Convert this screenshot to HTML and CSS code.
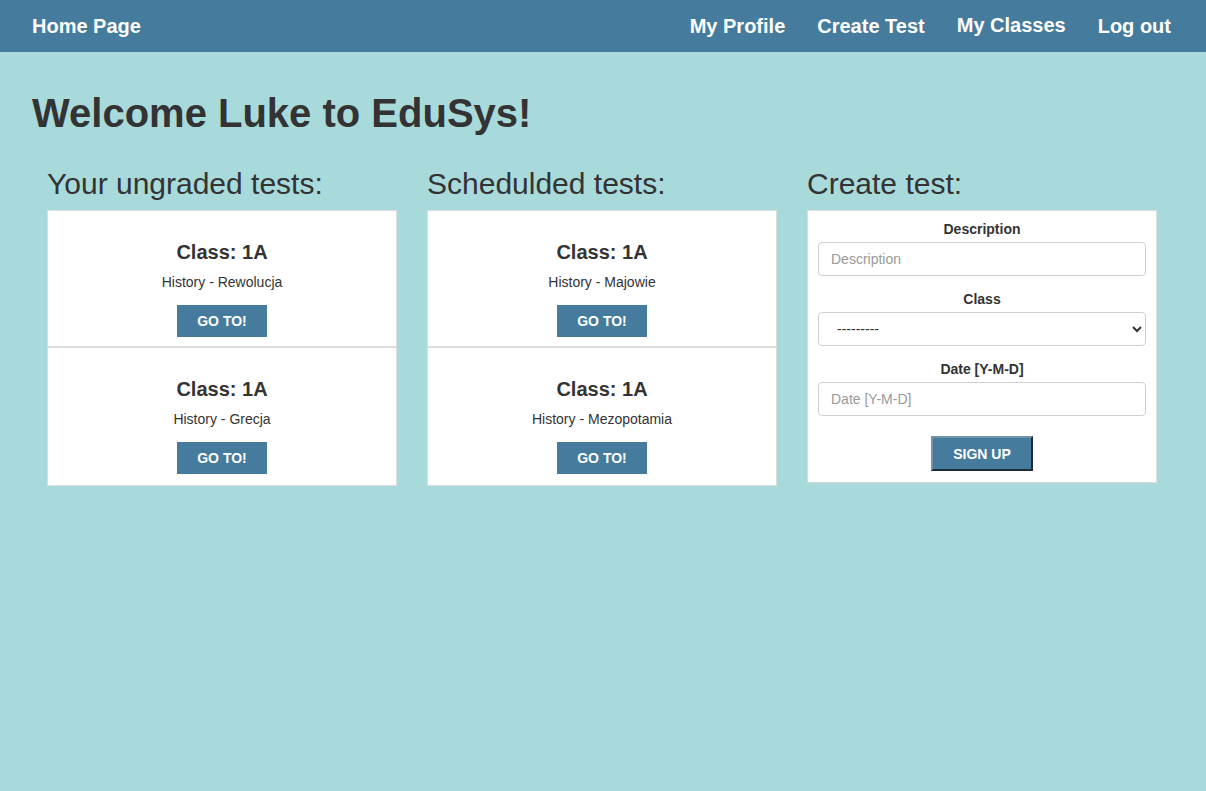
FILE: index.html
```html
<!DOCTYPE html>
<html lang="en">
<head>
<meta charset="utf-8">
<title>EduSys</title>
<link rel="stylesheet" href="styles.css">
</head>
<body>
<nav class="navbar">
  <a class="nav-brand" href="#">Home Page</a>
  <ul class="nav-links">
    <li><a href="#">My Profile</a></li>
    <li><a href="#">Create Test</a></li>
    <li><a href="#" class="active">My Classes</a></li>
    <li><a href="#">Log out</a></li>
  </ul>
</nav>
<main class="main">
  <h1 class="welcome">Welcome Luke to EduSys!</h1>
  <div class="columns">
    <section class="column">
      <h2 class="col-title">Your ungraded tests:</h2>
      <div class="card">
        <div class="item">
          <h3 class="item-title">Class: 1A</h3>
          <p class="item-sub">History - Rewolucja</p>
          <button class="btn">GO TO!</button>
        </div>
        <div class="item">
          <h3 class="item-title">Class: 1A</h3>
          <p class="item-sub">History - Grecja</p>
          <button class="btn">GO TO!</button>
        </div>
      </div>
    </section>
    <section class="column">
      <h2 class="col-title">Schedulded tests:</h2>
      <div class="card">
        <div class="item">
          <h3 class="item-title">Class: 1A</h3>
          <p class="item-sub">History - Majowie</p>
          <button class="btn">GO TO!</button>
        </div>
        <div class="item">
          <h3 class="item-title">Class: 1A</h3>
          <p class="item-sub">History - Mezopotamia</p>
          <button class="btn">GO TO!</button>
        </div>
      </div>
    </section>
    <section class="column">
      <h2 class="col-title">Create test:</h2>
      <form class="card form-card">
        <label class="form-label" for="desc">Description</label>
        <input class="form-control" id="desc" type="text" placeholder="Description">
        <label class="form-label" for="cls">Class</label>
        <select class="form-control form-select" id="cls">
          <option>---------</option>
        </select>
        <label class="form-label" for="date">Date [Y-M-D]</label>
        <input class="form-control" id="date" type="text" placeholder="Date [Y-M-D]">
        <button class="btn btn-submit" type="button">SIGN UP</button>
      </form>
    </section>
  </div>
</main>
</body>
</html>
```
FILE: styles.css
```css
* { box-sizing: border-box; }

html, body {
  margin: 0;
  padding: 0;
}

body {
  background: #a8dadc;
  font-family: "Liberation Sans", Arial, sans-serif;
  color: #333;
  min-height: 791px;
}

.navbar {
  height: 52px;
  background: #457b9d;
  display: flex;
  align-items: center;
  justify-content: space-between;
  padding: 0 19px 0 32px;
}

.nav-brand,
.nav-links a {
  color: #fff;
  font-weight: bold;
  font-size: 20px;
  text-decoration: none;
  line-height: 23px;
}

.nav-links {
  list-style: none;
  margin: 0;
  padding: 0;
  display: flex;
}

.nav-links a {
  display: block;
  padding: 0 16px;
}

.nav-links a.active {
  transform: translateY(-1px);
}

.main {
  padding: 38px 32px 0;
}

.welcome {
  margin: 0 0 30px;
  font-size: 40px;
  line-height: 46px;
  font-weight: bold;
}

.columns {
  display: grid;
  grid-template-columns: repeat(3, 350px);
  column-gap: 30px;
  margin-left: 15px;
  align-items: start;
}

.col-title {
  margin: 0 0 8px;
  font-size: 30px;
  font-weight: normal;
  line-height: 36px;
}

.card {
  background: #fff;
  border: 1px solid #dcdcdc;
}

.item {
  text-align: center;
  padding: 30px 0 9px;
}

.item + .item {
  border-top: 2px solid #dcdcdc;
  padding-bottom: 11px;
}

.item-title {
  margin: 0 0 10px;
  font-size: 20px;
  line-height: 23px;
  font-weight: bold;
}

.item-sub {
  margin: 0 0 15px;
  font-size: 14px;
  line-height: 16px;
}

.btn {
  display: inline-block;
  vertical-align: top;
  width: 90px;
  height: 32px;
  border: none;
  background: #457b9d;
  color: #fff;
  font-family: "Liberation Sans", Arial, sans-serif;
  font-weight: bold;
  font-size: 14px;
  padding: 0;
  cursor: pointer;
}

.form-card {
  display: flex;
  flex-direction: column;
  align-items: center;
  padding: 10px 10px 11px;
  margin: 0;
}

.form-label {
  display: block;
  font-size: 14px;
  line-height: 16px;
  font-weight: bold;
  margin: 0 0 5px;
}

.form-control {
  width: 100%;
  height: 34px;
  border: 1px solid #cfcfcf;
  border-radius: 4px;
  padding: 0 12px;
  font-family: "Liberation Sans", Arial, sans-serif;
  font-size: 14px;
  color: #333;
  background: #fff;
  margin: 0 0 15px;
}

.form-control::placeholder {
  color: #999;
}

.form-select {
  padding: 0 8px 0 14px;
}

.btn-submit {
  width: 102px;
  height: 35px;
  margin-top: 5px;
  border: 2px solid;
  border-color: #6f93aa #1f2a33 #1f2a33 #6f93aa;
}
```
